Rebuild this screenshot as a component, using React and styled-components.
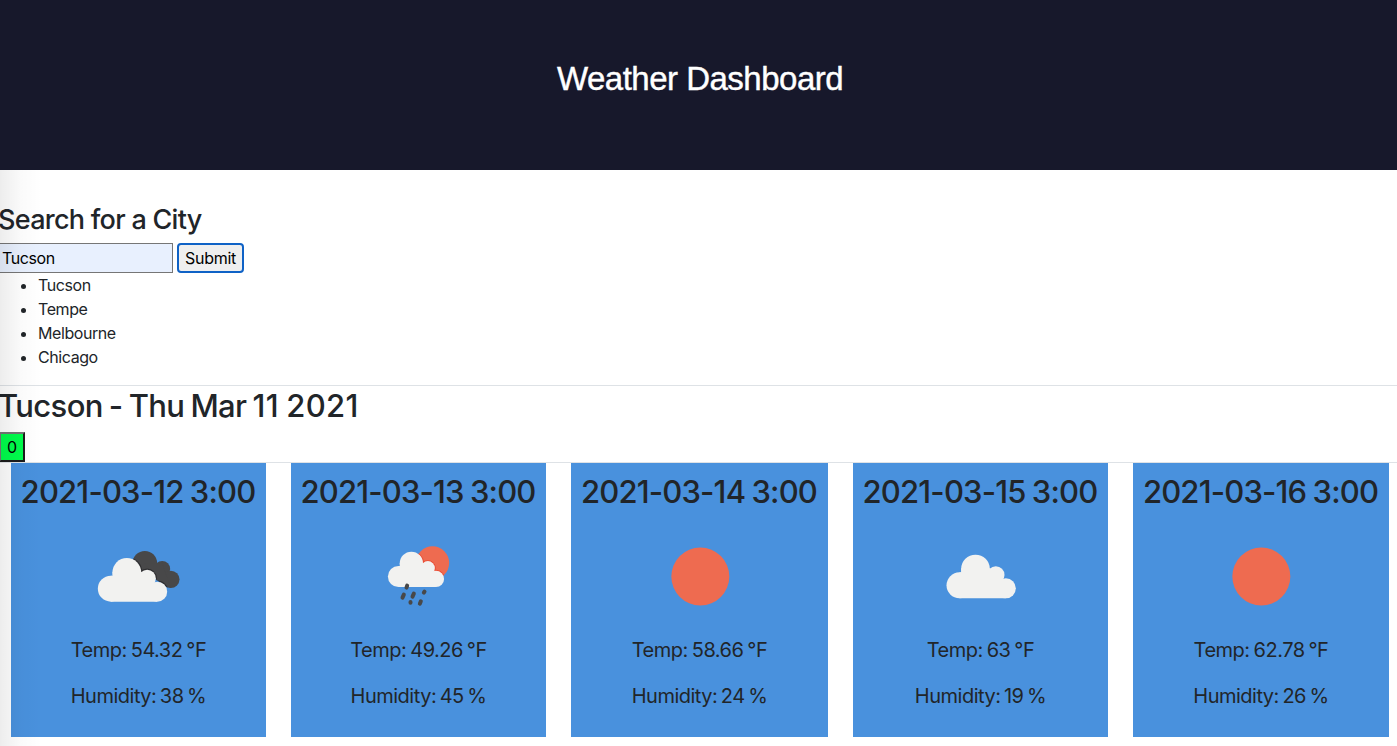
import React, { useState } from 'react';
import styled, { createGlobalStyle } from 'styled-components';

const GlobalStyle = createGlobalStyle`
  *, *::before, *::after { box-sizing: border-box; }
  body {
    margin: 0;
    background: #fff;
    color: #212529;
    font-family: Inter, "Liberation Sans", sans-serif;
    font-size: 16px;
    line-height: 1.5;
    overflow: hidden;
  }
`;

const Page = styled.div`
  position: relative;
  height: 746px;
`;

const EdgeShade = styled.div`
  position: absolute;
  left: 0;
  top: 170px;
  bottom: 0;
  width: 42px;
  pointer-events: none;
  background: linear-gradient(to right, rgba(0, 0, 0, 0.07), rgba(0, 0, 0, 0.02) 50%, transparent);
`;

const Header = styled.header`
  height: 170px;
  padding-top: 59px;
  background: #17182b;
  color: #fff;
  text-align: center;
`;

const Title = styled.h1`
  margin: 0;
  font: 400 33px/40px "Liberation Sans", Arial, sans-serif;
  letter-spacing: -0.5px;
  padding-left: 3px;
  -webkit-text-stroke: 0.4px #fff;
`;

const Search = styled.section`
  height: 216px;
  padding-top: 33px;
  border-bottom: 1px solid #dee2e6;
`;

const SearchHeading = styled.h3`
  margin: 0 0 6px;
  font-size: 27px;
  font-weight: 500;
  line-height: 34px;
  letter-spacing: -0.72px;
  text-indent: -2px;
`;

const SearchForm = styled.form`
  display: flex;
  gap: 4px;
`;

const CityInput = styled.input`
  width: 174px;
  height: 30px;
  margin-left: -1px;
  padding: 1px 2px;
  border: 1px solid #767676;
  border-radius: 0;
  background: #e8f0fe;
  color: #000;
  font: inherit;
  letter-spacing: -0.4px;
`;

const SubmitButton = styled.button`
  width: 67px;
  height: 30px;
  padding: 0;
  border: 2px solid #0f62c6;
  border-radius: 4px;
  background: #efefef;
  color: #000;
  font: inherit;
  letter-spacing: -0.3px;
`;

const CityList = styled.ul`
  margin: 0 0 16px;
  padding-left: 38px;
  letter-spacing: -0.42px;
`;

const Current = styled.section`
  height: 77px;
  padding-top: 1px;
  border-bottom: 1px solid #dee2e6;
`;

const CurrentHeading = styled.h2`
  margin: 0 0 7px;
  font-size: 31px;
  font-weight: 500;
  line-height: 38px;
  letter-spacing: -0.64px;
  word-spacing: -1.5px;
  text-indent: -2px;
`;

const DateDigits = styled.span`
  letter-spacing: 0.4px;
`;

const UvBadge = styled.button`
  display: block;
  width: 26px;
  height: 30px;
  margin-left: -1px;
  padding: 0;
  border: 2px solid #000;
  border-color: #767676 #1c1c1c #1c1c1c #767676;
  background: #00ff4c;
  color: #000;
  font: inherit;
`;

const Forecast = styled.main`
  display: grid;
  grid-template-columns: 255px 255px 257px 255px 256px;
  gap: 25px;
  padding: 0 8px 0 11px;
`;

const Card = styled.article`
  display: flex;
  flex-direction: column;
  align-items: center;
  height: 274px;
  padding-top: 10px;
  background: #4991dd;
`;

const CardDate = styled.h2`
  margin: 0 0 15px;
  font-size: 31px;
  font-weight: 500;
  line-height: 38px;
  letter-spacing: -0.82px;
  word-spacing: -1.2px;
  padding-right: 1px;
  white-space: nowrap;
`;

const WeatherIcon = styled.svg`
  display: block;
  width: 100px;
  height: 100px;
  margin-bottom: 9px;
`;

const Reading = styled.p`
  margin: 0 0 16px;
  font-size: 20px;
  line-height: 30px;
  letter-spacing: -0.5px;
  word-spacing: ${(p) => p.$wordGap};
  white-space: nowrap;
`;

const cloudShape = (
  <>
    <circle cx="136" cy="117" r="43" />
    <circle cx="88" cy="166" r="39" />
    <circle cx="197" cy="135" r="26" />
    <circle cx="227" cy="175" r="30" />
    <path d="M88 127H93V115H179L210 150L227 205H88Z" />
  </>
);

const Cloud = ({ rim, rimClip, transform }) => (
  <>
    {rim && (
      <g clipPath={`url(#${rimClip})`}>
        <g transform={transform} fill={rim} stroke={rim} strokeWidth="7">{cloudShape}</g>
      </g>
    )}
    <g fill="#f2f2f0" transform={transform}>{cloudShape}</g>
  </>
);

const darkCloudShape = (
  <>
    <circle cx="195" cy="100" r="37" />
    <circle cx="247" cy="117" r="24" />
    <circle cx="273" cy="148" r="26" />
    <path d="M195 100H247L273 174L230 150Z" />
  </>
);

const icons = {
  broken: (
    <WeatherIcon viewBox="27.5 -12 300 300">
      <clipPath id="dark-cloud">{darkCloudShape}</clipPath>
      <g fill="#484849">{darkCloudShape}</g>
      <Cloud transform="translate(5 10)" rim="#2f2f31" rimClip="dark-cloud" />
    </WeatherIcon>
  ),
  rain: (
    <WeatherIcon viewBox="-2.5 -12 300 300">
      <clipPath id="sun"><circle cx="188" cy="99" r="50" /></clipPath>
      <circle cx="188" cy="99" r="50" fill="#ee6b50" />
      <Cloud transform="translate(14.5 5) scale(.81)" rim="#ea4a32" rimClip="sun" />
      <path d="M112 167L110 173M102 194L98 203M132 191L128 200M164 185L162 188M122 216V218M153 214L150 221" fill="none" stroke="#484849" strokeWidth="12" strokeLinecap="round" />
    </WeatherIcon>
  ),
  clear: (
    <WeatherIcon viewBox="0 0 300 300">
      <circle cx="151" cy="151.5" r="87" fill="#ee6b50" />
    </WeatherIcon>
  ),
  cloud: (
    <WeatherIcon viewBox="2.5 -12 300 300">
      <Cloud />
    </WeatherIcon>
  ),
};

const cities = ['Tucson', 'Tempe', 'Melbourne', 'Chicago'];

const days = [
  { date: '2021-03-12 3:00', icon: 'broken', temp: '54.32', humidity: 38 },
  { date: '2021-03-13 3:00', icon: 'rain', temp: '49.26', humidity: 45 },
  { date: '2021-03-14 3:00', icon: 'clear', temp: '58.66', humidity: 24 },
  { date: '2021-03-15 3:00', icon: 'cloud', temp: '63', humidity: 19 },
  { date: '2021-03-16 3:00', icon: 'clear', temp: '62.78', humidity: 26 },
];

export default function App() {
  const [city, setCity] = useState('Tucson');
  return (
    <Page>
      <GlobalStyle />
      <Header>
        <Title>Weather Dashboard</Title>
      </Header>
      <Search>
        <SearchHeading>Search for a City</SearchHeading>
        <SearchForm onSubmit={(e) => e.preventDefault()}>
          <CityInput value={city} onChange={(e) => setCity(e.target.value)} />
          <SubmitButton>Submit</SubmitButton>
        </SearchForm>
        <CityList>
          {cities.map((name) => <li key={name}>{name}</li>)}
        </CityList>
      </Search>
      <Current>
        <CurrentHeading>Tucson - Thu Mar <DateDigits>11 2021</DateDigits></CurrentHeading>
        <UvBadge>0</UvBadge>
      </Current>
      <Forecast>
        {days.map((day) => (
          <Card key={day.date}>
            <CardDate>{day.date}</CardDate>
            {icons[day.icon]}
            <Reading $wordGap="-1.2px">Temp: {day.temp} °F</Reading>
            <Reading $wordGap="-1.6px">Humidity: {day.humidity} %</Reading>
          </Card>
        ))}
      </Forecast>
      <EdgeShade />
    </Page>
  );
}
